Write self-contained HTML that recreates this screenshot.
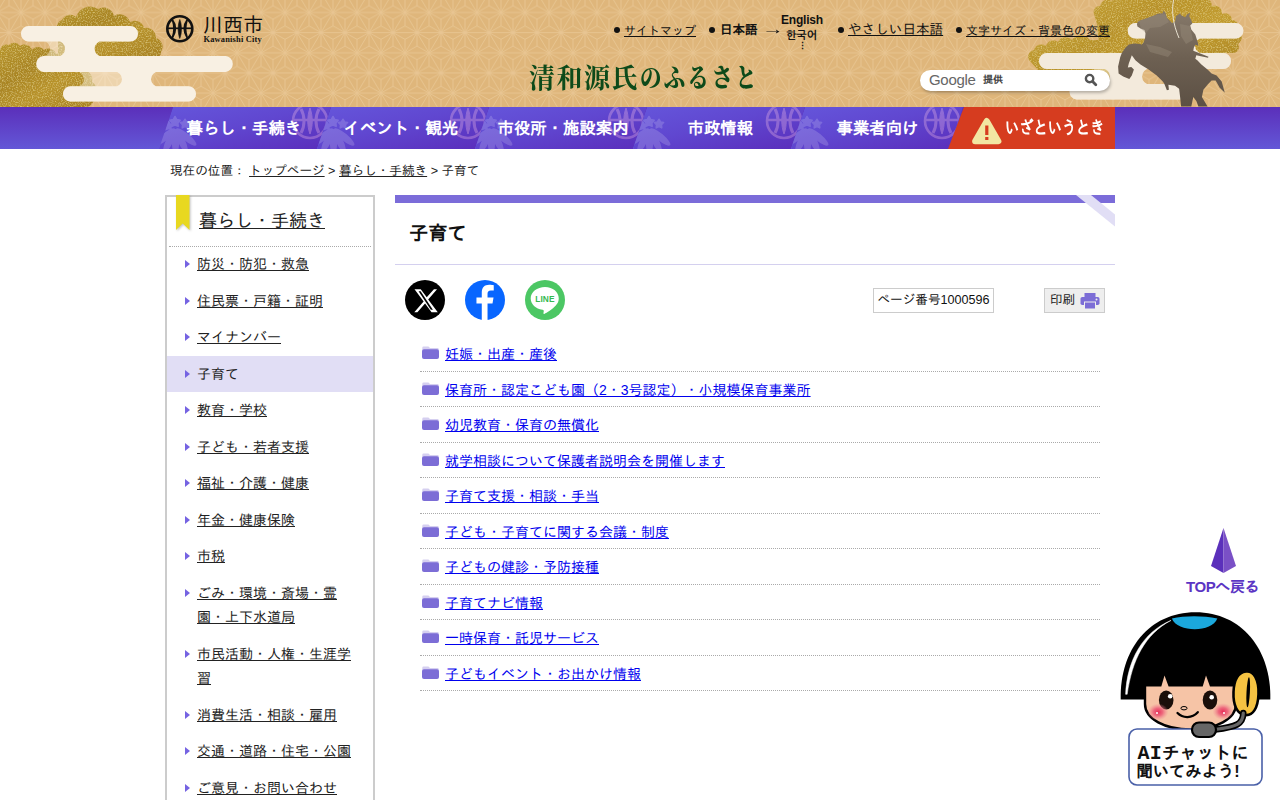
<!DOCTYPE html>
<html lang="ja">
<head>
<meta charset="utf-8">
<title>子育て｜川西市</title>
<style>
*{box-sizing:border-box}
html,body{margin:0;padding:0}
body{width:1280px;height:800px;overflow:hidden;background:#fff;color:#222;font-family:"Liberation Sans","IPAGothic",sans-serif;font-size:14px;position:relative}
a{color:#222}
ul{list-style:none;margin:0;padding:0}
#header{position:absolute;left:0;top:0;width:1280px;height:107px;background:#dfb67b;overflow:hidden}
#hbg{position:absolute;left:0;top:0}
#logo{position:absolute;left:165px;top:14px;width:110px;height:30px}
#logo .nm{position:absolute;left:38px;top:-1px;font-size:20px;line-height:24px;color:#111;letter-spacing:.2px;white-space:nowrap}
#logo .en{position:absolute;left:38.5px;top:21px;font-family:"Liberation Serif",serif;font-weight:bold;font-size:8.4px;line-height:9px;color:#111;white-space:nowrap;letter-spacing:.2px}
#hl{position:absolute;top:0;left:0}
#hl span,#hl a{position:absolute;white-space:nowrap;line-height:16px;color:#111}
#hl .bu{width:6px;height:6px;border-radius:50%;background:#111}
#tag{position:absolute;left:529px;top:58px;font-family:"Noto Serif CJK JP","Noto Serif CJK SC",serif;font-weight:700;font-size:26px;line-height:36px;letter-spacing:1.5px;color:#0d4a1a;white-space:nowrap;transform:scaleY(1.06);transform-origin:0 50%}
#tag span{display:inline-block;font-weight:900;font-size:21.500px;letter-spacing:2.300px;margin-left:1px;transform:translateY(-1.200px) scaleY(1.150);transform-origin:0 70%}
#search{position:absolute;left:920px;top:70px;width:190px;height:21px;border-radius:11px;background:#fff;box-shadow:1px 2px 3px rgba(0,0,0,.25)}
#search .g{position:absolute;left:9px;top:1px;font-size:15px;line-height:18px;color:#666;letter-spacing:-.3px}
#search .t{position:absolute;left:63px;top:4px;font-size:10px;line-height:12px;color:#444;font-weight:bold}
#nav{position:absolute;left:0;top:107px;width:1280px;height:42px;background:linear-gradient(#5b2fba,#6357d7);overflow:hidden}
#navbg{position:absolute;left:0;top:0}
#nav .nb{position:absolute;top:0;width:172px;height:42px;background:linear-gradient(100deg,#6354da 0%,#6048d2 40%,#5a30c0 95%);clip-path:polygon(14px 0,172px 0,158px 100%,0 100%)}
#nav .it{position:absolute;top:0;height:42px;line-height:42px;color:#fff;font-weight:bold;font-size:16.400px;white-space:nowrap}
#nav .red{position:absolute;left:948px;top:0;width:167px;height:42px;background:#d63c1f;clip-path:polygon(16px 0,100% 0,100% 100%,0 100%)}
#nav .iz{position:absolute;left:1005px;top:0;line-height:43px;font-size:18px;font-weight:bold;color:#fff;white-space:nowrap;transform:scaleX(.79);transform-origin:0 0}
#crumb{position:absolute;left:170px;top:162px;font-size:12.6px;line-height:18px;white-space:nowrap}
#side{position:absolute;left:165px;top:195px;width:210px;height:620px;border:2px solid #ccc;background:#fff}
#side h2{margin:0;position:absolute;left:32px;top:10px;font-size:18px;font-weight:normal;line-height:28px;white-space:nowrap}
#side .rib{position:absolute;left:8px;top:-2px;filter:drop-shadow(1px 1px 1px rgba(0,0,0,.25))}
#side .hr{position:absolute;left:2px;right:2px;top:49px;border-top:1px dotted #aaa}
#side ul{position:absolute;left:0;top:49px;width:206px}
#side li{position:relative;padding:6px 20px 6px 30px;line-height:24.5px;font-size:14px}
#side li:before{content:"";position:absolute;left:18px;top:14px;border-left:5px solid #7563e2;border-top:4px solid transparent;border-bottom:4px solid transparent}
#side li.cur{background:#e1def5}
#main{position:absolute;left:395px;top:195px;width:720px}
#main .bar{position:absolute;left:0;top:0;width:720px;height:8px;background:#7b6cd9}
#main h1{position:absolute;left:14px;top:23px;margin:0;font-size:19.3px;line-height:32px;font-weight:bold;color:#111}
#main .hl{position:absolute;left:0;top:69px;width:720px;border-top:1px solid #d4d0ef}
.sns{position:absolute;top:85px;width:40px;height:40px;border-radius:50%}
#pno{position:absolute;left:478px;top:93px;width:121px;height:25px;border:1px solid #ccc;font-size:12.6px;line-height:23px;text-align:center;white-space:nowrap;color:#111}
#prt{position:absolute;left:649px;top:93px;width:61px;height:25px;border:1px solid #ccc;background:#eee;font-size:12.6px;line-height:23px;padding-left:5px;white-space:nowrap;color:#222}
#list{position:absolute;left:25px;top:141px;width:680px}
#list li{position:relative;height:35.500px;border-bottom:1px dotted #aaa;padding-left:25px;line-height:24px;padding-top:6px;font-size:14px}
#list li a{color:#0000ee}
#list .fo{position:absolute;left:2px;top:10px}
#top{position:absolute;left:1186px;top:528px;width:74px;height:68px}
#top span{position:absolute;left:0;top:50px;font-size:15px;font-weight:bold;line-height:18px;color:#5b35c4;white-space:nowrap;letter-spacing:-.4px}
#chat{position:absolute;left:1115px;top:608px}
</style>
</head>
<body>
<div id="header">
<svg id="hbg" width="1280" height="107" viewBox="0 0 1280 107">
<defs>
<pattern id="asa" width="24.0" height="40.300" patternUnits="userSpaceOnUse" patternTransform="translate(21,12.5)">
<path d="M0.00,0.00L24.00,0.00M0.00,20.15L24.00,20.15M0.00,40.30L24.00,40.30M0.00,0.00L12.00,20.15M24.00,0.00L12.00,20.15M12.00,20.15L0.00,40.30M12.00,20.15L24.00,40.30M12.00,6.72L0.00,0.00M12.00,6.72L24.00,0.00M12.00,6.72L12.00,20.15M12.00,33.58L0.00,40.30M12.00,33.58L24.00,40.30M12.00,33.58L12.00,20.15M0.00,13.43L0.00,0.00M0.00,13.43L-12.00,20.15M0.00,13.43L12.00,20.15M0.00,26.87L0.00,40.30M0.00,26.87L-12.00,20.15M0.00,26.87L12.00,20.15M24.00,13.43L24.00,0.00M24.00,13.43L12.00,20.15M24.00,13.43L36.00,20.15M24.00,26.87L24.00,40.30M24.00,26.87L12.00,20.15M24.00,26.87L36.00,20.15" stroke="#e8c693" stroke-width="0.9" fill="none"/>
</pattern>
<linearGradient id="gold" x1="0" y1="0" x2="1" y2="1">
<stop offset="0" stop-color="#b8962e"/><stop offset="0.35" stop-color="#a98524"/><stop offset="0.6" stop-color="#b8932c"/><stop offset="1" stop-color="#a68022"/>
</linearGradient>
<linearGradient id="gold2" x1="0" y1="0" x2="1" y2="1"><stop offset="0" stop-color="#c4a136"/><stop offset="0.4" stop-color="#b8922a"/><stop offset="0.7" stop-color="#c29c30"/><stop offset="1" stop-color="#b08a26"/></linearGradient>
<filter id="gn" x="0" y="0" width="100%" height="100%"><feTurbulence type="fractalNoise" baseFrequency="0.8" numOctaves="2" seed="3" result="n"/><feColorMatrix in="n" type="matrix" values="0 0 0 0 0.85  0 0 0 0 0.72  0 0 0 0 0.25  1.6 0 0 0 -0.75" result="sp"/><feComposite in="sp" in2="SourceGraphic" operator="in" result="spc"/><feMerge><feMergeNode in="SourceGraphic"/><feMergeNode in="spc"/></feMerge></filter>
<linearGradient id="brz" x1="0" y1="0" x2="0" y2="1">
<stop offset="0" stop-color="#86796a"/><stop offset="0.5" stop-color="#6d6052"/><stop offset="1" stop-color="#5c5044"/>
</linearGradient>
</defs>
<rect width="1280" height="107" fill="#dfb67b"/>
<rect width="1280" height="107" fill="url(#asa)"/>
<path d="M0,50A6.4,6.4 0 0 1 9,45A6.8,6.8 0 0 1 20,46A7.8,7.8 0 0 1 32,50A7.4,7.4 0 0 1 44,50A7.8,7.8 0 0 1 56,54A9.4,9.4 0 0 1 70,60A9.7,9.7 0 0 1 82,70A9.7,9.7 0 0 1 92,82A8.8,8.8 0 0 1 94,96A9.2,9.2 0 0 1 84,107L0,107Z" fill="url(#gold)" filter="url(#gn)"/>
<path d="M58,30A6.7,6.7 0 0 1 62,20A8.9,8.9 0 0 1 76,17A14.5,14.5 0 0 1 98,9A10.8,10.8 0 0 1 114,16A10.6,10.6 0 0 1 130,22A9.4,9.4 0 0 1 144,28A9.7,9.7 0 0 1 156,38A9.2,9.2 0 0 1 161,52A4.4,4.4 0 0 1 156,57L58,57Z" fill="url(#gold)" filter="url(#gn)"/>
<path d="M28.8,26.0H130.2A7.8,7.8 0 0 1 130.2,41.6H28.8A7.8,7.8 0 0 1 28.8,26.0ZM43.5,55.9H225.5A8.1,8.1 0 0 1 225.5,72.0H43.5A8.1,8.1 0 0 1 43.5,55.9ZM70.6,86.3H188.4A7.6,7.6 0 0 1 188.4,101.5H70.6A7.6,7.6 0 0 1 70.6,86.3ZM57.4,41.1H102.2A7.6,7.6 0 0 0 102.2,56.4H57.4A7.6,7.6 0 0 0 57.4,41.1ZM114.3,71.5H158.7A7.6,7.6 0 0 0 158.7,86.8H114.3A7.6,7.6 0 0 0 114.3,71.5Z" fill="#f3eadc"/>
<path d="M28.8,26.0H130.2A7.8,7.8 0 0 1 130.2,41.6H28.8A7.8,7.8 0 0 1 28.8,26.0ZM43.5,55.9H225.5A8.1,8.1 0 0 1 225.5,72.0H43.5A8.1,8.1 0 0 1 43.5,55.9ZM70.6,86.3H188.4A7.6,7.6 0 0 1 188.4,101.5H70.6A7.6,7.6 0 0 1 70.6,86.3ZM42.4,41.1H102.2A7.6,7.6 0 0 0 102.2,56.4H42.4A7.6,7.6 0 0 0 42.4,41.1ZM76.3,71.5H158.7A7.6,7.6 0 0 0 158.7,86.8H76.3A7.6,7.6 0 0 0 76.3,71.5Z" fill="#fff8ea" opacity=".45"/>
<path d="M1094,14A6.0,6.0 0 0 1 1100,6A7.8,7.8 0 0 1 1112,1A9.8,9.8 0 0 1 1128,-2A43.2,43.2 0 0 1 1200,-2A8.7,8.7 0 0 1 1212,6A7.7,7.7 0 0 1 1222,14A7.0,7.0 0 0 1 1232,20A7.0,7.0 0 0 1 1238,30A8.4,8.4 0 0 1 1238,44A5.9,5.9 0 0 1 1234,53L1100,53L1097,24Z" fill="url(#gold2)" filter="url(#gn)"/>
<path d="M1029,60A6.7,6.7 0 0 1 1034,50A7.6,7.6 0 0 1 1046,46A7.6,7.6 0 0 1 1058,42A8.5,8.5 0 0 1 1072,40A10.8,10.8 0 0 1 1090,40L1140,40L1140,60L1114,74L1112,82L1100,86L1040,72Z" fill="url(#gold2)" filter="url(#gn)"/>
<path d="M1135.5,23.0H1235.6A7.8,7.8 0 0 1 1235.6,38.6H1135.5A7.8,7.8 0 0 1 1135.5,23.0ZM1047.0,53.0H1223.0A8.0,8.0 0 0 1 1223.0,69.0H1047.0A8.0,8.0 0 0 1 1047.0,53.0ZM1076.5,84.0H1180.2A7.8,7.8 0 0 1 1180.2,99.5H1076.5A7.8,7.8 0 0 1 1076.5,84.0ZM1142.3,38.1H1202.7A7.7,7.7 0 0 0 1202.7,53.5H1142.3A7.7,7.7 0 0 0 1142.3,38.1ZM1090.0,68.5H1150.0A8.0,8.0 0 0 0 1150.0,84.5H1090.0A8.0,8.0 0 0 0 1090.0,68.5Z" fill="#fff8ea" opacity=".45"/>
<path d="M1135.5,23.0H1235.6A7.8,7.8 0 0 1 1235.6,38.6H1135.5A7.8,7.8 0 0 1 1135.5,23.0ZM1047.0,53.0H1223.0A8.0,8.0 0 0 1 1223.0,69.0H1047.0A8.0,8.0 0 0 1 1047.0,53.0ZM1076.5,84.0H1180.2A7.8,7.8 0 0 1 1180.2,99.5H1076.5A7.8,7.8 0 0 1 1076.5,84.0ZM1142.3,38.1H1202.7A7.7,7.7 0 0 0 1202.7,53.5H1142.3A7.7,7.7 0 0 0 1142.3,38.1ZM1102.0,68.5H1150.0A8.0,8.0 0 0 0 1150.0,84.5H1102.0A8.0,8.0 0 0 0 1102.0,68.5Z" fill="#f3eadc"/>
<polygon points="1136.9,23.9 1137.9,21.8 1140.5,20.3 1146.6,18.3 1154.7,15.2 1157.7,13.7 1162.8,13.2 1163.3,10.7 1165.4,12.7 1166.9,17.8 1169.4,20.3 1172.0,22.9 1175.0,21.8 1176.0,16.3 1180.1,13.2 1181.1,15.2 1185.2,17.3 1187.2,14.2 1190.2,12.7 1189.2,16.3 1191.3,20.3 1192.3,23.4 1190.2,25.4 1191.3,29.5 1195.3,34.5 1197.9,42.7 1198.4,45.7 1195.3,44.7 1193.8,47.7 1193.3,50.7 1208.5,56.8 1208.0,57.8 1196.3,55.2 1195.3,58.8 1197.3,60.3 1201.4,64.4 1207.5,69.5 1211.6,73.5 1216.6,75.5 1221.7,81.6 1224.8,92.8 1219.7,87.7 1215.6,80.6 1211.6,80.6 1207.5,84.7 1203.4,89.8 1201.9,96.9 1205.5,103.0 1207.5,106.5 1198.4,106.5 1196.3,100.9 1193.3,96.9 1191.3,106.5 1181.1,106.5 1180.1,96.9 1179.1,88.8 1175.0,85.7 1168.4,84.7 1168.9,89.8 1166.9,90.3 1164.3,83.7 1162.8,81.6 1156.7,75.5 1148.6,69.5 1140.5,64.4 1135.4,60.3 1131.8,55.2 1128.8,63.4 1127.8,67.4 1131.3,66.9 1133.9,69.5 1131.8,75.5 1129.3,79.1 1123.2,76.6 1118.6,73.5 1118.1,66.4 1120.2,57.3 1121.7,53.2 1125.2,48.1 1128.8,44.6 1134.4,43.6 1140.5,44.1 1141.5,44.7 1143.5,42.7 1145.0,38.6 1145.5,33.5 1144.5,30.0 1140.5,28.4 1137.4,26.4" fill="url(#brz)"/>
<path d="M1173.500,0C1171.500,12 1173,24 1179,38" fill="none" stroke="#e9e2d2" stroke-width="1"/>
<path d="M1139,21L1156,15L1165,14L1169,22L1160,27L1150,28L1146,33L1141,29Z M1146,44L1160,47L1172,52L1168,57L1150,52Z M1180,24L1190,26L1193,40L1186,44L1181,36Z" fill="#9a8e7e" opacity=".4"/>
</svg>
<div id="logo">
<svg width="30" height="30" viewBox="0 0 30 30"><circle cx="14.8" cy="14.8" r="12.5" fill="none" stroke="#111" stroke-width="2.6"/><path d="M2.5,14.3H27.5" stroke="#111" stroke-width="1.7"/><path d="M14.8,5.5C12.6,11 12.6,19 14.8,24.500C17,19 17,11 14.8,5.500Z" fill="#111" stroke="#111" stroke-width=".6"/><path d="M7.5,6C11.300,11 11.300,18 7.500,23.500C9.300,18 9.300,11 7.500,6ZM22.100,6C18.300,11 18.300,18 22.100,23.500C20.300,18 20.300,11 22.100,6Z" fill="#111" stroke="#111" stroke-width="1.700" stroke-linejoin="round"/></svg>
<span class="nm">川西市</span><span class="en">Kawanishi City</span>
</div>
<div id="hl">
<span class="bu" style="left:614px;top:27px"></span><a href="#" style="left:624px;top:23px;font-size:12px">サイトマップ</a>
<span class="bu" style="left:709px;top:27px"></span><span style="left:720px;top:22px;font-size:12.5px;font-weight:bold">日本語</span><span style="left:762px;top:21px;font-size:15px;transform:scaleX(1.450);transform-origin:0 0">→</span>
<span style="left:781px;top:12px;font-size:12px;font-weight:bold;letter-spacing:-.2px">English</span><span style="left:786px;top:27px;font-size:11px;font-weight:bold;font-family:'Liberation Sans','NanumGothic','Noto Sans CJK KR',sans-serif">한국어</span><span style="left:798px;top:38px;font-size:9px;font-weight:bold">⋮</span>
<span class="bu" style="left:838px;top:27px"></span><a href="#" style="left:848px;top:22px;font-size:13.6px">やさしい日本語</a>
<span class="bu" style="left:956px;top:27px"></span><a href="#" style="left:966px;top:23px;font-size:12px">文字サイズ・背景色の変更</a>
</div>
<div id="tag">清和源氏<span>のふるさと</span></div>
<div id="search"><span class="g">Google</span><span class="t">提供</span>
<svg style="position:absolute;left:164px;top:3px" width="14" height="14" viewBox="0 0 14 14"><circle cx="5.6" cy="5.6" r="3.700" fill="none" stroke="#555" stroke-width="2.400"/><path d="M8.6,8.6L11.800,11.800" stroke="#555" stroke-width="2.800" stroke-linecap="round"/></svg>
</div>
</div>
<div id="nav">
<svg id="navbg" width="1280" height="42" viewBox="0 0 1280 42"><defs><linearGradient id="ng" x1="0" y1="0" x2="1" y2="1"><stop offset="0" stop-color="#6556db"/><stop offset="0.45" stop-color="#6047d0"/><stop offset="1" stop-color="#5a2dbb"/></linearGradient><g id="crest"><g fill="#fff" stroke="#fff" fill-opacity="1"><polygon points="2.0,9.5 3.8,12.6 7.2,13.3 4.9,15.9 5.2,19.4 2.0,18.0 -1.2,19.4 -0.9,15.9 -3.2,13.3 0.2,12.6" stroke-width="1.5" stroke-linejoin="round"/><polygon points="-4.5,14.5 -3.0,17.0 -0.2,17.6 -2.1,19.8 -1.9,22.6 -4.5,21.5 -7.1,22.6 -6.9,19.8 -8.8,17.6 -6.0,17.0" stroke-width="1.5" stroke-linejoin="round"/><polygon points="12.0,12.2 13.6,14.9 16.6,15.5 14.5,17.8 14.8,20.9 12.0,19.6 9.2,20.9 9.5,17.8 7.4,15.5 10.4,14.9" stroke-width="1.5" stroke-linejoin="round"/><g transform="translate(2.5,21)" stroke="none"><ellipse cx="0" cy="14" rx="3.6" ry="13" transform="rotate(-50)"/><ellipse cx="0" cy="14" rx="3.6" ry="13" transform="rotate(-25)"/><ellipse cx="0" cy="14" rx="3.6" ry="13" transform="rotate(0)"/><ellipse cx="0" cy="14" rx="3.6" ry="13" transform="rotate(25)"/><ellipse cx="0" cy="14" rx="3.6" ry="13" transform="rotate(50)"/></g></g></g><g id="embl"><g fill="none" stroke="#ffc8e8" stroke-width="2.6"><circle cx="0" cy="0" r="17"/><path d="M-17,-1H17"/><path d="M-9,-12C-5,-5 -5,5 -9,12M9,-12C5,-5 5,5 9,12" stroke-width="3"/><path d="M0,-13C-3,-5 -3,5 0,13C3,5 3,-5 0,-13Z" fill="#ffc8e8" stroke-width="1"/></g></g><clipPath id="nc0"><polygon points="173,0 331,0 317,42 159,42"/></clipPath><clipPath id="nc1"><polygon points="331,0 489,0 475,42 317,42"/></clipPath><clipPath id="nc2"><polygon points="489,0 647,0 633,42 475,42"/></clipPath><clipPath id="nc3"><polygon points="647,0 805,0 791,42 633,42"/></clipPath><clipPath id="nc4"><polygon points="805,0 963,0 949,42 791,42"/></clipPath></defs><g clip-path="url(#nc0)"><polygon points="173,0 331,0 317,42 159,42" fill="url(#ng)"/><use href="#embl" x="310" y="14" opacity=".3"/><use href="#crest" x="173" y="0" opacity=".17"/></g><g clip-path="url(#nc1)"><polygon points="331,0 489,0 475,42 317,42" fill="url(#ng)"/><use href="#embl" x="468" y="14" opacity=".3"/><use href="#crest" x="331" y="0" opacity=".17"/></g><g clip-path="url(#nc2)"><polygon points="489,0 647,0 633,42 475,42" fill="url(#ng)"/><use href="#embl" x="626" y="14" opacity=".3"/><use href="#crest" x="489" y="0" opacity=".17"/></g><g clip-path="url(#nc3)"><polygon points="647,0 805,0 791,42 633,42" fill="url(#ng)"/><use href="#embl" x="784" y="14" opacity=".3"/><use href="#crest" x="647" y="0" opacity=".17"/></g><g clip-path="url(#nc4)"><polygon points="805,0 963,0 949,42 791,42" fill="url(#ng)"/><use href="#embl" x="942" y="14" opacity=".3"/><use href="#crest" x="805" y="0" opacity=".17"/></g><polygon points="964,0 1115,0 1115,42 948,42" fill="#d63c1f"/></svg><span class="it" style="left:186.5px">暮らし・手続き</span><span class="it" style="left:343.5px">イベント・観光</span><span class="it" style="left:497.5px">市役所・施設案内</span><span class="it" style="left:687.5px">市政情報</span><span class="it" style="left:836.5px">事業者向け</span>
<svg style="position:absolute;left:971px;top:9px" width="32" height="30" viewBox="0 0 32 30"><path d="M15.75,5L27.4,25.2H4.1Z" fill="#f2e6a2" stroke="#f2e6a2" stroke-width="6" stroke-linejoin="round"/><rect x="14.2" y="9.5" width="3.2" height="9.5" fill="#d63c1f"/><rect x="14.2" y="21" width="3.2" height="3" fill="#d63c1f"/></svg>
<span class="iz">いざというとき</span>
</div>
<div id="crumb">現在の位置： <a href="#">トップページ</a> &gt; <a href="#">暮らし・手続き</a> &gt; 子育て</div>
<div id="side">
<svg class="rib" width="16" height="38" viewBox="0 0 16 38"><path d="M1,0H14.500V35L7.700,28.500L1,35Z" fill="#e8d820"/></svg>
<h2><a href="#">暮らし・手続き</a></h2>
<div class="hr"></div>
<ul><li><a href="#">防災・防犯・救急</a></li><li><a href="#">住民票・戸籍・証明</a></li><li><a href="#">マイナンバー</a></li><li class="cur"><span>子育て</span></li><li><a href="#">教育・学校</a></li><li><a href="#">子ども・若者支援</a></li><li><a href="#">福祉・介護・健康</a></li><li><a href="#">年金・健康保険</a></li><li><a href="#">市税</a></li><li><a href="#">ごみ・環境・斎場・霊園・上下水道局</a></li><li><a href="#">市民活動・人権・生涯学習</a></li><li><a href="#">消費生活・相談・雇用</a></li><li><a href="#">交通・道路・住宅・公園</a></li><li><a href="#">ご意見・お問い合わせ</a></li></ul>
</div>
<div id="main">
<div class="bar"></div>
<svg style="position:absolute;left:670px;top:0" width="50" height="32" viewBox="0 0 50 32"><path d="M11,0H26L50,19.6V31.5Z" fill="#e1def5"/><path d="M0,0H10L50,32V40H0Z" fill="#fff" opacity="0"/></svg>
<h1>子育て</h1>
<div class="hl"></div>
<div class="sns" style="left:10px;background:#000"><svg width="40" height="40" viewBox="0 0 40 40"><g transform="translate(20.3,20.6) scale(1.2) translate(-20,-20)"><path d="M11,10.5h5.2l5,6.8l6-6.8h2.6l-7.4,8.5l8,10.7h-5.2l-5.4-7.3l-6.4,7.3h-2.6l7.8-8.9z" fill="#fff"/><path d="M14.4,12.2h1.7l10.2,15.4h-1.7z" fill="#000"/></g></svg></div>
<div class="sns" style="left:70px;background:#0866ff"><svg width="40" height="40" viewBox="0 0 40 40"><g transform="translate(20.5,40) scale(1.13) translate(-20.5,-40)"><path d="M22.3,40V25.5h4.4l.9-5.5h-5.3v-3.2c0-1.8.7-2.9 3-2.9h2.5V9.2c-.6-.1-2.2-.3-4-.3c-4.2,0-6.6,2.400-6.600,6.800V20h-4.700v5.500h4.700V40z" fill="#fff"/></g></svg></div>
<div class="sns" style="left:130px;background:#4cc764"><svg width="40" height="40" viewBox="0 0 40 40"><path transform="translate(20,20.5) scale(1.1) translate(-20,-20.5)" d="M20,8.3c-7.2,0-13,4.600-13,10.300c0,5.100,4.600,9.400,10.700,10.200c.4.100,1,.3,1.100.7c.1.300.1.900,0,1.200l-.2,1.100c0,.3-.2,1.300,1.100.7c1.400-.6,7.400-4.400,10.100-7.500c1.900-2,2.700-4.100,2.700-6.400C32.500,12.900,27.200,8.300,20,8.300z" fill="#fff"/><text x="19.900" y="22.100" font-family="Liberation Sans,sans-serif" font-weight="bold" font-size="8.300" text-anchor="middle" fill="#35b950" letter-spacing=".1">LINE</text></svg></div>
<div id="pno">ページ番号1000596</div>
<div id="prt">印刷 <svg style="position:absolute;left:35px;top:4px" width="20" height="16" viewBox="0 0 20 16"><rect x="4.500" y="0" width="11" height="4" fill="#7c6dd6"/><rect x="0.500" y="4" width="19" height="8" rx="1.800" fill="#7c6dd6"/><rect x="4.500" y="9" width="11" height="7" fill="#7c6dd6" stroke="#eee" stroke-width="1"/><circle cx="16.500" cy="6.500" r="1" fill="#eee"/></svg></div>
<ul id="list"><li><svg class="fo" width="17" height="13" viewBox="0 0 17 13"><path d="M1.5,0.5h5l1.5,1.5h7.5a1.2,1.2 0 0 1 1.2,1.2v7h-16.4v-8.5a1.2,1.2 0 0 1 1.2,-1.2z" fill="#d5cff0"/><rect x="0" y="3.2" width="17" height="9.8" rx="2" fill="#7c6dd6"/></svg><a href="#">妊娠・出産・産後</a></li><li><svg class="fo" width="17" height="13" viewBox="0 0 17 13"><path d="M1.5,0.5h5l1.5,1.5h7.5a1.2,1.2 0 0 1 1.2,1.2v7h-16.4v-8.5a1.2,1.2 0 0 1 1.2,-1.2z" fill="#d5cff0"/><rect x="0" y="3.2" width="17" height="9.8" rx="2" fill="#7c6dd6"/></svg><a href="#">保育所・認定こども園（2・3号認定）・小規模保育事業所</a></li><li><svg class="fo" width="17" height="13" viewBox="0 0 17 13"><path d="M1.5,0.5h5l1.5,1.5h7.5a1.2,1.2 0 0 1 1.2,1.2v7h-16.4v-8.5a1.2,1.2 0 0 1 1.2,-1.2z" fill="#d5cff0"/><rect x="0" y="3.2" width="17" height="9.8" rx="2" fill="#7c6dd6"/></svg><a href="#">幼児教育・保育の無償化</a></li><li><svg class="fo" width="17" height="13" viewBox="0 0 17 13"><path d="M1.5,0.5h5l1.5,1.5h7.5a1.2,1.2 0 0 1 1.2,1.2v7h-16.4v-8.5a1.2,1.2 0 0 1 1.2,-1.2z" fill="#d5cff0"/><rect x="0" y="3.2" width="17" height="9.8" rx="2" fill="#7c6dd6"/></svg><a href="#">就学相談について保護者説明会を開催します</a></li><li><svg class="fo" width="17" height="13" viewBox="0 0 17 13"><path d="M1.5,0.5h5l1.5,1.5h7.5a1.2,1.2 0 0 1 1.2,1.2v7h-16.4v-8.5a1.2,1.2 0 0 1 1.2,-1.2z" fill="#d5cff0"/><rect x="0" y="3.2" width="17" height="9.8" rx="2" fill="#7c6dd6"/></svg><a href="#">子育て支援・相談・手当</a></li><li><svg class="fo" width="17" height="13" viewBox="0 0 17 13"><path d="M1.5,0.5h5l1.5,1.5h7.5a1.2,1.2 0 0 1 1.2,1.2v7h-16.4v-8.5a1.2,1.2 0 0 1 1.2,-1.2z" fill="#d5cff0"/><rect x="0" y="3.2" width="17" height="9.8" rx="2" fill="#7c6dd6"/></svg><a href="#">子ども・子育てに関する会議・制度</a></li><li><svg class="fo" width="17" height="13" viewBox="0 0 17 13"><path d="M1.5,0.5h5l1.5,1.5h7.5a1.2,1.2 0 0 1 1.2,1.2v7h-16.4v-8.5a1.2,1.2 0 0 1 1.2,-1.2z" fill="#d5cff0"/><rect x="0" y="3.2" width="17" height="9.8" rx="2" fill="#7c6dd6"/></svg><a href="#">子どもの健診・予防接種</a></li><li><svg class="fo" width="17" height="13" viewBox="0 0 17 13"><path d="M1.5,0.5h5l1.5,1.5h7.5a1.2,1.2 0 0 1 1.2,1.2v7h-16.4v-8.5a1.2,1.2 0 0 1 1.2,-1.2z" fill="#d5cff0"/><rect x="0" y="3.2" width="17" height="9.8" rx="2" fill="#7c6dd6"/></svg><a href="#">子育てナビ情報</a></li><li><svg class="fo" width="17" height="13" viewBox="0 0 17 13"><path d="M1.5,0.5h5l1.5,1.5h7.5a1.2,1.2 0 0 1 1.2,1.2v7h-16.4v-8.5a1.2,1.2 0 0 1 1.2,-1.2z" fill="#d5cff0"/><rect x="0" y="3.2" width="17" height="9.8" rx="2" fill="#7c6dd6"/></svg><a href="#">一時保育・託児サービス</a></li><li><svg class="fo" width="17" height="13" viewBox="0 0 17 13"><path d="M1.5,0.5h5l1.5,1.5h7.5a1.2,1.2 0 0 1 1.2,1.2v7h-16.4v-8.5a1.2,1.2 0 0 1 1.2,-1.2z" fill="#d5cff0"/><rect x="0" y="3.2" width="17" height="9.8" rx="2" fill="#7c6dd6"/></svg><a href="#">子どもイベント・お出かけ情報</a></li></ul>
</div>
<div id="top"><svg style="position:absolute;left:25px;top:-.5px" width="26" height="45" viewBox="0 0 26 45"><path d="M12.500,0L0,38L12.500,45Z" fill="#5b30bb"/><path d="M12.500,0L25,38L12.500,45Z" fill="#7a50c6"/></svg><span>TOPへ戻る</span></div>
<div id="chat">
<svg width="160" height="185" viewBox="0 0 160 185">
<path d="M5.700,91.500C4.500,42 34,4.300 80.500,4.300C127,4.300 156.500,42 155.300,91.500Z" fill="#000"/>
<path d="M30,64H121V96C121,111 101,121.500 75.500,121.500C50,121.500 30,111 30,96Z" fill="#f6c4a6" stroke="#000" stroke-width="2.400"/>
<path d="M28,60H123V78.500H95L91,67.500L87.700,78.500H53.600L49.500,67.500L46.300,78.500H28Z" fill="#000"/>
<path d="M56.900,10.500C62,24.500 97,25 102.300,10.500C88,7.500 70,7.500 56.900,10.500Z" fill="#1ba8dc"/>
<path d="M10.600,86.300C12,52 28,24 56,12.400C30,26 17,52 12.200,86.300Z" fill="#fff" stroke="#fff" stroke-width=".5"/>
<ellipse cx="51.200" cy="92" rx="7.300" ry="9.400" fill="#1a0f0a"/><ellipse cx="95" cy="92" rx="7.300" ry="9.400" fill="#1a0f0a"/>
<circle cx="55.200" cy="88.300" r="2.300" fill="#fff"/><circle cx="96.700" cy="89.300" r="2.300" fill="#fff"/>
<radialGradient id="ck"><stop offset="0" stop-color="#e62e58"/><stop offset="0.45" stop-color="#ec5a76" stop-opacity=".85"/><stop offset="1" stop-color="#f08a96" stop-opacity="0"/></radialGradient>
<ellipse cx="43" cy="104" rx="10.500" ry="8.500" fill="url(#ck)"/><ellipse cx="108" cy="103.500" rx="10.500" ry="8.500" fill="url(#ck)"/>
<circle cx="42" cy="105" r="1" fill="#fff"/><circle cx="109" cy="105" r="1" fill="#fff"/>
<path d="M62.500,105C68,110.500 77,110.500 82.800,104.200" fill="none" stroke="#000" stroke-width="2.300" stroke-linecap="round"/>
<ellipse cx="69" cy="100.200" rx="3.100" ry="1.700" fill="#f6c4a6" stroke="#000" stroke-width="1"/>
<path d="M131,63.500C139,62.500 144,72 143.500,86C143,100 138,108 130,107C122,106 118,97 118.500,84C119,71 123,64.500 131,63.500Z" fill="#f5c242" stroke="#000" stroke-width="2.600"/><ellipse cx="133.200" cy="84.300" rx="1.700" ry="15" fill="#000" transform="rotate(3 133.200 84.300)"/>
<rect x="14" y="121" width="133" height="56" rx="8" fill="#fff" stroke="#4a60a8" stroke-width="1.600"/>
<path d="M128.300,105C128,116 122,119 100,121.500" fill="none" stroke="#000" stroke-width="6.500" stroke-linecap="round"/><path d="M128.300,105C128,116 122,119 100,121.500" fill="none" stroke="#666" stroke-width="3.200" stroke-linecap="round"/>
<rect x="77" y="114.500" width="24" height="14.500" rx="7" fill="#666" stroke="#000" stroke-width="2.200"/>
<text x="22.500" y="151" font-family="Liberation Sans,IPAGothic,sans-serif" font-weight="bold" font-size="17.300" fill="#111"><tspan font-family="Liberation Mono,monospace" font-size="20" letter-spacing=".3">AI</tspan>チャットに</text>
<text x="21.500" y="168.500" font-family="Liberation Sans,IPAGothic,sans-serif" font-weight="bold" font-size="16.300" fill="#111">聞いてみよう!</text>
</svg>
</div>
</body>
</html>
